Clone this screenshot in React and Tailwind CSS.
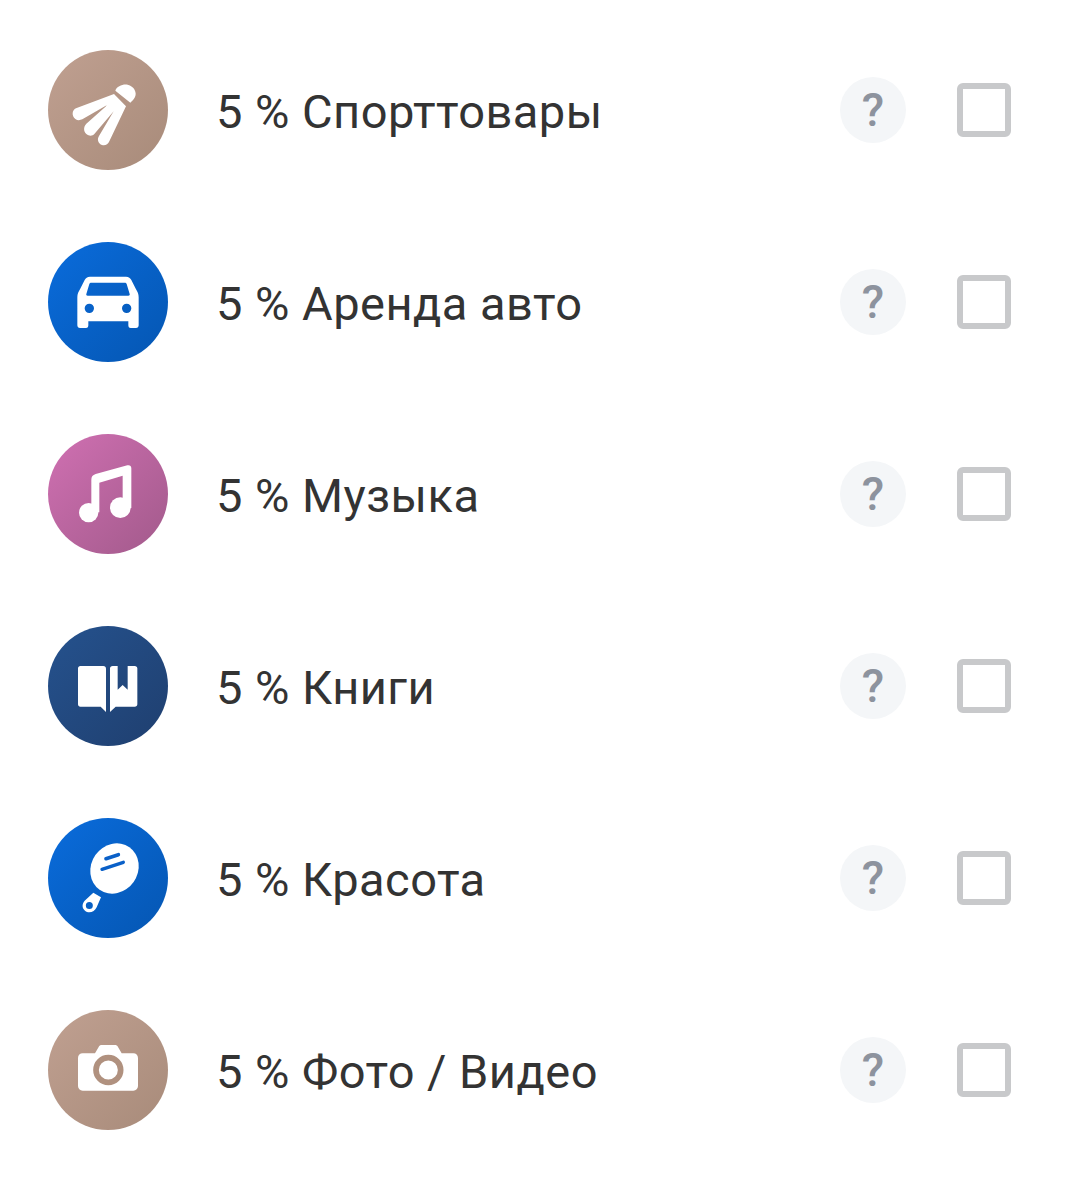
const W = ({ children }) => (
  <svg viewBox="24 30 360 360" className="w-full h-full block">{children}</svg>
);

const Shuttle = () => (
  <W>
    <g fill="#fff">
      <path d="M226 152 C230 138 250 131 263 134 C282 138 292 158 285 171 C282 177 277 183 271 188 Z" />
      <path d="M222 162 L108 205 C96 210 94 228 106 237 C113 242 120 241 127 238 L200 196 L198 199 L139 251 C130 260 130 274 139 282 C148 289 157 288 163 282 L221 214 L177 288 C170 299 175 311 186 315 C195 318 204 313 208 304 L258 199 Z" />
    </g>
  </W>
);

const Car = () => (
  <W>
    <path
      fill="#fff"
      fillRule="evenodd"
      d="M150 134 H258 C266 134 271 138 274 144 L288 172 C293 180 296 186 296 196 V280 C296 285 293 288 288 288 H272 C267 288 265 285 265 280 V268 H145 V280 C145 285 143 288 138 288 H120 C115 288 112 285 112 280 V196 C112 186 115 180 120 172 L134 144 C137 138 142 134 150 134 Z M154 152 C150 152 149 154 148 156 L139 186 C138 189 140 191 143 191 H265 C268 191 270 189 269 186 L260 156 C259 154 258 152 254 152 Z M148 215 A14 14 0 1 0 148 243 A14 14 0 1 0 148 215 Z M260 215 A14 14 0 1 0 260 243 A14 14 0 1 0 260 215 Z"
    />
  </W>
);

const Music = () => (
  <W>
    <g fill="#fff">
      <circle cx="146" cy="266" r="29" />
      <circle cx="241" cy="251" r="31" />
      <path d="M154 265 V168 C154 158 158 153 167 150 L262 124 C269 122 274 126 274 133 V252 H248 V155 L178 176 V265 Z" />
    </g>
  </W>
);

const Book = () => (
  <W>
    <g fill="#fff">
      <path d="M121 150 H190 C195 150 198 153 198 158 V288 L182 272 H121 C117 272 114 269 114 265 V157 C114 153 117 150 121 150 Z" />
      <path d="M210 288 V158 C210 153 213 150 218 150 H233 V221 L248 207 L263 221 V150 H284 C289 150 292 153 292 157 V265 C292 269 289 272 284 272 H227 Z" />
    </g>
  </W>
);

const Mirror = () => (
  <W>
    <ellipse cx="223.500" cy="181.500" rx="78" ry="70" fill="#fff" transform="rotate(-55 223.500 181.500)" />
    <path
      fill="#fff"
      fillRule="evenodd"
      d="M160 254 L183 268 L170 298 C164 312 146 318 135 308 C125 299 126 288 134 278 Z M148 282 A10.500 10.500 0 1 0 148 303 A10.500 10.500 0 1 0 148 282 Z"
    />
    <path d="M198 152 L235 140" stroke="#0a60c8" strokeWidth="11" strokeLinecap="round" />
    <path d="M186 184 L250 163" stroke="#0a60c8" strokeWidth="10" strokeLinecap="round" />
  </W>
);

const Camera = () => (
  <W>
    <path
      fill="#fff"
      d="M128 160 H165 L176 141 C178 137 181 135 186 135 H224 C229 135 232 137 234 141 L245 160 H280 C288 160 294 166 294 174 V258 C294 266 288 272 280 272 H128 C120 272 114 266 114 258 V174 C114 166 120 160 128 160 Z"
    />
    <circle cx="205" cy="210" r="37" fill="none" stroke="#b0917f" strokeWidth="17" />
  </W>
);

const rows = [
  { label: "5 % Спорттовары", icon: <Shuttle />, bg: "bg-gradient-to-br from-[#c0a091] to-[#a88b7a]" },
  { label: "5 % Аренда авто", icon: <Car />, bg: "bg-gradient-to-br from-[#0a6cdc] to-[#0556b2]" },
  { label: "5 % Музыка", icon: <Music />, bg: "bg-gradient-to-br from-[#d070b2] to-[#a25a8b]" },
  { label: "5 % Книги", icon: <Book />, bg: "bg-gradient-to-br from-[#25528e] to-[#1f3f6f]" },
  { label: "5 % Красота", icon: <Mirror />, bg: "bg-gradient-to-br from-[#0a6cdc] to-[#0556b2]" },
  { label: "5 % Фото / Видео", icon: <Camera />, bg: "bg-gradient-to-br from-[#c0a091] to-[#a88b7a]" },
];

export default function App() {
  return (
    <div
      className="w-[1080px] h-[1195px] bg-white pt-[50px] pl-[48px] pr-[69px] flex flex-col gap-[72px] overflow-hidden"
      style={{ fontFamily: "Roboto, sans-serif" }}
    >
      {rows.map((r) => (
        <div key={r.label} className="flex items-center h-[120px]">
          <div className={`w-[120px] h-[120px] rounded-full shrink-0 ${r.bg}`}>{r.icon}</div>
          <div className="ml-[48px] text-[47px] leading-[60px] text-[#333333] tracking-[0.47px] translate-y-[2px]">
            {r.label}
          </div>
          <div className="ml-auto w-[66px] h-[66px] rounded-full bg-[#f4f6f8] flex items-center justify-center text-[46px] font-medium leading-none text-[#8d939e]">
            ?
          </div>
          <div className="ml-[51px] w-[54px] h-[54px] rounded-[6px] border-[6px] border-[#c8c9cb] bg-white" />
        </div>
      ))}
    </div>
  );
}
